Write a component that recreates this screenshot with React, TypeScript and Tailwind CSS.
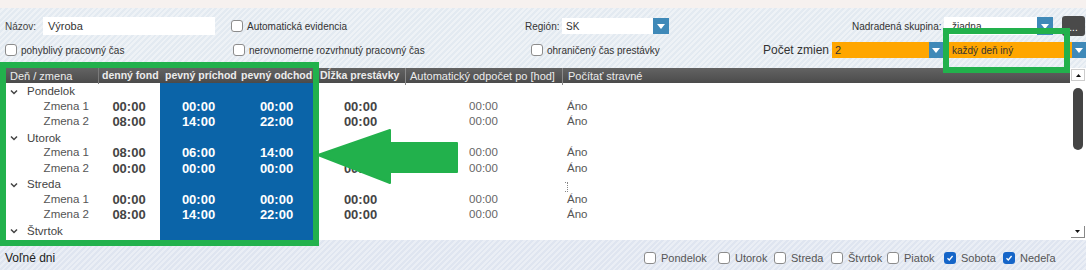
import React from "react";

const hatch =
  "bg-[#e6edf3] bg-[repeating-linear-gradient(135deg,#e3eaf1_0px,#e3eaf1_2px,#eef2f6_2px,#eef2f6_4px)]";
const hatchBottom =
  "bg-[#e2e8f2] bg-[repeating-linear-gradient(135deg,#dfe5f0_0px,#dfe5f0_2px,#eaeef5_2px,#eaeef5_4px)]";

function Cb({ checked = false }: { checked?: boolean }) {
  if (checked) {
    return (
      <span className="flex h-[12px] w-[12px] shrink-0 items-center justify-center rounded-[3px] bg-[#1565c8]">
        <svg width="8" height="8" viewBox="0 0 8 8">
          <polyline points="1.5,4.2 3.3,6 6.6,2" fill="none" stroke="#fff" strokeWidth="1.3" />
        </svg>
      </span>
    );
  }
  return <span className="block h-[12px] w-[12px] shrink-0 rounded-[3px] border border-[#8c8c8c] bg-white" />;
}

function DropBtn({ w = 16 }: { w?: number }) {
  return (
    <span className={`flex h-full shrink-0 items-center justify-center bg-[#3f89b8] ${w === 16 ? "w-[16px]" : "w-[14px]"}`}>
      <svg width="8" height="5" viewBox="0 0 8 5">
        <polygon points="0,0 8,0 4,5" fill="#fff" />
      </svg>
    </span>
  );
}

function Chevron() {
  return (
    <svg width="8" height="6" viewBox="0 0 8 6" className="ml-[10px] mr-[9px] shrink-0">
      <polyline points="1,1.5 4,4.5 7,1.5" fill="none" stroke="#444" strokeWidth="1.5" />
    </svg>
  );
}

type Row =
  | { t: "day"; name: string; mark?: boolean }
  | { t: "shift"; name: string; f: string; p: string; o: string; d: string; a: string; s: string };

const rows: Row[] = [
  { t: "day", name: "Pondelok" },
  { t: "shift", name: "Zmena 1", f: "00:00", p: "00:00", o: "00:00", d: "00:00", a: "00:00", s: "Áno" },
  { t: "shift", name: "Zmena 2", f: "08:00", p: "14:00", o: "22:00", d: "00:00", a: "00:00", s: "Áno" },
  { t: "day", name: "Utorok" },
  { t: "shift", name: "Zmena 1", f: "08:00", p: "06:00", o: "14:00", d: "00:00", a: "00:00", s: "Áno" },
  { t: "shift", name: "Zmena 2", f: "00:00", p: "00:00", o: "00:00", d: "00:00", a: "00:00", s: "Áno" },
  { t: "day", name: "Streda", mark: true },
  { t: "shift", name: "Zmena 1", f: "00:00", p: "00:00", o: "00:00", d: "00:00", a: "00:00", s: "Áno" },
  { t: "shift", name: "Zmena 2", f: "08:00", p: "14:00", o: "22:00", d: "00:00", a: "00:00", s: "Áno" },
  { t: "day", name: "Štvrtok" },
];

const grid = "grid grid-cols-[98px_62px_77px_79px_89px_157px_1fr]";

const freeDays: { l: string; c: boolean; w: string }[] = [
  { l: "Pondelok", c: false, w: "w-[74px]" },
  { l: "Utorok", c: false, w: "w-[56px]" },
  { l: "Streda", c: false, w: "w-[57px]" },
  { l: "Štvrtok", c: false, w: "w-[56px]" },
  { l: "Piatok", c: false, w: "w-[57px]" },
  { l: "Sobota", c: true, w: "w-[59px]" },
  { l: "Nedeľa", c: true, w: "w-[54px]" },
];

export default function App() {
  return (
    <div className="relative flex h-[270px] w-[1086px] flex-col overflow-hidden bg-white font-['Liberation_Sans',Arial,sans-serif]">
      {/* top strip */}
      <div className="h-[8px] shrink-0 bg-[#f6f1ef]" />

      {/* form */}
      <div className={`h-[60px] shrink-0 ${hatch} pt-[9px] text-[10px] text-[#333]`}>
        {/* row 1 */}
        <div className="flex h-[18px] items-center">
          <div className="flex w-[231px] items-center pl-[5px]">
            <span className="w-[38px] text-[#444]">Názov:</span>
            <span className="flex h-[18px] w-[172px] items-center bg-white pl-[5px] text-[11px] text-[#333]">Výroba</span>
          </div>
          <div className="flex w-[294px] items-center gap-[4px]">
            <Cb />
            <span>Automatická evidencia</span>
          </div>
          <div className="flex w-[327px] items-center">
            <span className="w-[37px]">Región:</span>
            <span className="flex h-[16px] w-[107px] items-center bg-white pl-[4px]">
              <span className="flex-1">SK</span>
              <DropBtn />
            </span>
          </div>
          <div className="flex items-center">
            <span className="w-[92px]">Nadradená skupina:</span>
            <span className="flex h-[18px] w-[109px] items-center bg-white pl-[8px]">
              <span className="flex-1">žiadna</span>
              <DropBtn />
            </span>
            <span className="ml-[9px] flex h-[20px] w-[23px] items-end justify-center rounded-[3px] bg-[#4a4a4a] pb-[3px] text-[10px] leading-none text-white">
              ...
            </span>
          </div>
        </div>
        {/* row 2 */}
        <div className="mt-[7px] flex h-[16px] items-center">
          <div className="flex w-[233px] items-center gap-[4px] pl-[5px]">
            <Cb />
            <span>pohyblivý pracovný čas</span>
          </div>
          <div className="flex w-[298px] items-center gap-[4px]">
            <Cb />
            <span>nerovnomerne rozvrhnutý pracovný čas</span>
          </div>
          <div className="flex w-[232px] items-center gap-[4px]">
            <Cb />
            <span>ohraničený čas prestávky</span>
          </div>
          <span className="w-[69px] text-[12px] text-[#333]">Počet zmien</span>
          <span className="flex h-[16px] w-[111px] items-center bg-[#ffa600] pl-[3px] text-[11px] text-[#333]">
            <span className="flex-1">2</span>
            <DropBtn w={14} />
          </span>
          <span className="ml-[3px] flex h-[16px] flex-1 items-center bg-[#ffa600] pl-[6px] text-[10px] text-[#333]">
            <span className="flex-1">každý deň iný</span>
            <DropBtn w={14} />
          </span>
        </div>
      </div>

      {/* table */}
      <div className="flex h-[172px] shrink-0">
        <div className="flex flex-1 flex-col">
          <div className={`${grid} h-[15px] shrink-0 items-center bg-[linear-gradient(#636363,#4b4b4b)] text-[#ececec]`}>
            <span className="pl-[10px] text-[11px]">Deň / zmena</span>
            <span className="border-l border-[#7a7a7a] pl-[3px] text-[10.5px] font-bold">denný fond</span>
            <span className="pl-[5px] text-[10.5px] font-bold">pevný príchod</span>
            <span className="whitespace-nowrap pl-[4px] text-[10.5px] font-bold">pevný odchod</span>
            <span className="pl-[4px] text-[10.5px] font-bold">Dĺžka prestávky</span>
            <span className="border-l border-[#8a8a8a] pl-[4px] text-[11px]">Automatický odpočet po [hod]</span>
            <span className="border-l border-[#8a8a8a] pl-[5px] text-[11px]">Počítať stravné</span>
          </div>
          <div className="flex flex-1 flex-col">
            {rows.map((r, i) =>
              r.t === "day" ? (
                <div key={i} className={`${grid} h-[15.5px] shrink-0 items-center`}>
                  <span className="flex items-center text-[11.5px] text-[#444]">
                    <Chevron />
                    {r.name}
                  </span>
                  <span />
                  <span className="h-full bg-[#0b64a8]" />
                  <span className="h-full bg-[#0b64a8]" />
                  <span />
                  <span />
                  <span className="flex items-center pl-[3px]">
                    {r.mark ? <span className="mt-[4px] block h-[10px] w-[3px] border-y border-r border-dotted border-[#888]" /> : null}
                  </span>
                </div>
              ) : (
                <div key={i} className={`${grid} h-[15.5px] shrink-0 items-center leading-none`}>
                  <span className="pr-[9px] text-right text-[11.5px] text-[#555]">{r.name}</span>
                  <span className="text-center text-[13px] font-bold text-[#444]">{r.f}</span>
                  <span className="flex h-full items-center justify-center bg-[#0b64a8] text-[13px] font-bold text-white">{r.p}</span>
                  <span className="flex h-full items-center justify-center bg-[#0b64a8] text-[13px] font-bold text-white">{r.o}</span>
                  <span className="text-center text-[13px] font-bold text-[#444]">{r.d}</span>
                  <span className="text-center text-[11.5px] text-[#666]">{r.a}</span>
                  <span className="pl-[5px] text-[11.5px] text-[#555]">{r.s}</span>
                </div>
              )
            )}
            <div className={`${grid} flex-1`}>
              <span />
              <span />
              <span className="bg-[#0b64a8]" />
              <span className="bg-[#0b64a8]" />
            </div>
          </div>
        </div>
        {/* scrollbar */}
        <div className="flex w-[16px] shrink-0 flex-col items-center bg-white pt-[1px]">
          <span className="flex h-[12px] w-[14px] items-center justify-center border border-[#ccc] bg-white">
            <svg width="5" height="3" viewBox="0 0 5 3">
              <polygon points="0,3 5,3 2.5,0" fill="#111" />
            </svg>
          </span>
          <span className="mt-[7px] h-[62px] w-[10px] rounded-full bg-[#444]" />
          <span className="flex-1" />
          <span className="mb-[2px] flex h-[12px] w-[14px] items-center justify-center border-b border-r border-[#888] bg-white">
            <svg width="5" height="3" viewBox="0 0 5 3">
              <polygon points="0,0 5,0 2.5,3" fill="#111" />
            </svg>
          </span>
        </div>
      </div>

      {/* bottom bar */}
      <div className={`flex flex-1 items-center ${hatchBottom} pl-[5px] pr-[29px] pt-[6px]`}>
        <span className="text-[12px] text-[#222]">Voľné dni</span>
        <div className="ml-auto flex items-center text-[11px] text-[#555]">
          {freeDays.map((d) => (
            <span key={d.l} className={`flex items-center gap-[5px] ${d.w}`}>
              <Cb checked={d.c} />
              <span>{d.l}</span>
            </span>
          ))}
        </div>
      </div>

      {/* green highlight overlays */}
      <div className="pointer-events-none absolute left-0 top-[62px] h-[184px] w-[319px] border-[6px] border-[#22b14c]" />
      <div className="pointer-events-none absolute left-[943px] top-[28px] h-[45px] w-[127px] border-[6px] border-[#22b14c]" />
      <svg className="pointer-events-none absolute left-0 top-0" width="1086" height="270" viewBox="0 0 1086 270">
        <polygon
          points="318,155 390,130 390,143 457,143 457,172 390,172 390,183"
          fill="#22b14c"
          stroke="#22b14c"
          strokeWidth="2"
          strokeLinejoin="round"
        />
      </svg>
    </div>
  );
}
